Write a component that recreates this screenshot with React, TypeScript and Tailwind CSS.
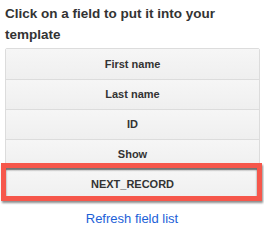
import React from 'react';

const fields = ['First name', 'Last name', 'ID', 'Show', 'NEXT_RECORD'];

export default function App() {
  return (
    <div className="relative w-[264px] h-[233px] bg-white font-['Liberation_Sans',Arial,sans-serif]">
      <h1 className="pl-[5px] pt-[3px] pr-10 text-[13.5px] leading-[21px] font-bold text-[#333]">
        Click on a field to put it into your template
      </h1>

      {/* field list */}
      <div className="mt-[3px] mx-[5px] w-[255px] border border-[#dcdcdc] rounded-[2px]">
        {fields.map((f, i) => (
          <div
            key={f}
            className={`h-[30px] flex items-center justify-center bg-gradient-to-b from-[#f6f6f6] to-[#efefef] text-[11px] font-bold text-[#333] ${
              i > 0 ? 'border-t border-[#dcdcdc]' : ''
            }`}
          >
            {f}
          </div>
        ))}
      </div>

      {/* highlight annotation */}
      <div className="absolute left-[1px] top-[163px] w-[261px] h-[38px] border-[5px] border-[#f6574b] shadow-[1px_2px_2px_rgba(0,0,0,0.45),inset_0_2px_2px_rgba(0,0,0,0.55)]" />

      <div className="mt-[9px] text-center text-[13px] text-[#1c5fd8]">
        Refresh field list
      </div>
    </div>
  );
}
